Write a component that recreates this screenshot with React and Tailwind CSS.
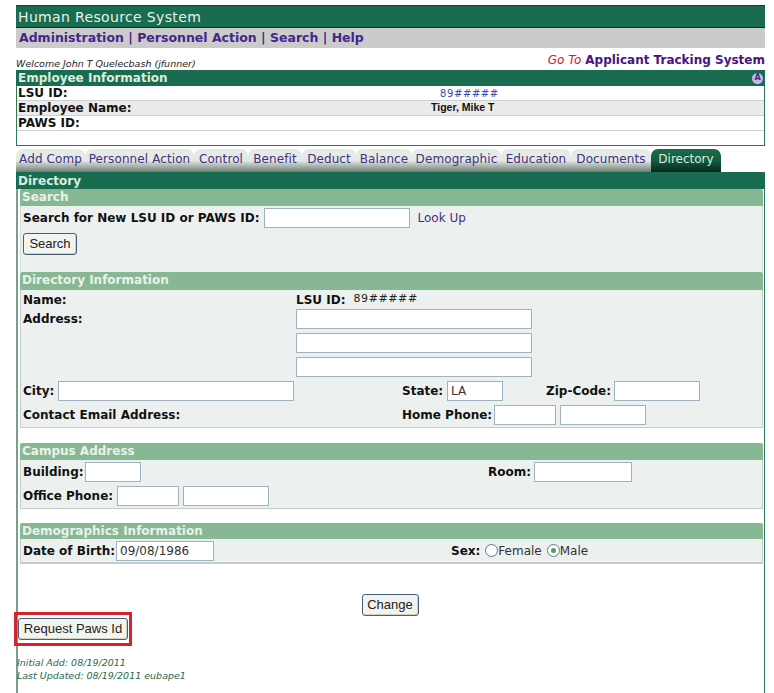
const font = { fontFamily: '"DejaVu Sans", sans-serif' };

function Inp({ w, value, extra = "" }) {
  return (
    <div className={`h-[20px] shrink-0 border border-[#9fb2c0] bg-white px-[3px] text-[12px] leading-[18px] text-[#333] ${w} ${extra}`}>
      {value}
    </div>
  );
}

function Btn({ children, w }) {
  return (
    <div className={`flex h-[22px] items-center justify-center rounded-[3px] border border-[#47607a] bg-[#f4f4ee] text-[13px] text-[#222] shadow-[inset_-1px_-1px_0_#cfcfc8] ${w}`} style={{ fontFamily: '"Liberation Sans", sans-serif' }}>
      {children}
    </div>
  );
}

function SecHead({ children, h = "h-[17px]" }) {
  return (
    <div className={`${h} rounded-t-[2px] bg-[#88b794] pl-[2px] text-[12px] font-bold leading-[17px] text-[#e8f2ea]`}>
      {children}
    </div>
  );
}

const L = ({ children, className = "" }) => (
  <span className={`whitespace-nowrap text-[12px] font-bold text-[#111] ${className}`}>{children}</span>
);

const tabs = [
  ["Add Comp", "w-[69px]"],
  ["Personnel Action", "w-[109px]"],
  ["Control", "w-[54px]"],
  ["Benefit", "w-[54px]"],
  ["Deduct", "w-[54px]"],
  ["Balance", "w-[56px]"],
  ["Demographic", "w-[89px]"],
  ["Education", "w-[70px]"],
  ["Documents", "w-[80px]"],
];

function Radio({ checked }) {
  return (
    <span className="flex h-[13px] w-[13px] items-center justify-center rounded-full border border-[#5a7590] bg-white">
      {checked && <span className="h-[5px] w-[5px] rounded-full bg-[#4aa05e]" />}
    </span>
  );
}

export default function App() {
  return (
    <div className="h-[693px] w-[774px] overflow-hidden bg-white pl-[16px] pr-[9px] pt-[5px]" style={font}>
      {/* title */}
      <div className="h-[23px] border-t border-b border-t-[#0f4a35] border-b-[#10241b] bg-[#196c4f] pl-[2px] text-[14px] leading-[22px] tracking-[0.35px] text-[#e6f3ee]">
        Human Resource System
      </div>
      <div className="flex h-[20px] items-center bg-[#cbcbcb] pl-[3px] text-[12.5px] font-bold text-[#46258c]">
        Administration | Personnel Action | Search | Help
      </div>

      {/* welcome row */}
      <div className="flex h-[22px] items-end justify-between">
        <span className="text-[9.5px] italic leading-[12px] text-[#222]">Welcome John T Quelecbash (jfunner)</span>
        <span className="mb-[3px] whitespace-nowrap text-[12px] leading-[14px]">
          <span className="italic text-[#c0262c]">Go To </span>
          <span className="font-bold text-[#46147c]">Applicant Tracking System</span>
        </span>
      </div>

      {/* employee info */}
      <div className="h-[76px] border border-t-0 border-[#2d7a5f]">
        <div className="-mx-px flex h-[16px] items-center justify-between bg-[#196c4f] px-[2px] text-[12px] font-bold leading-[16px] text-[#dcecdf]">
          Employee Information
          <span className="flex h-[11px] w-[11px] items-center justify-center rounded-full bg-[#c9b8e6] text-[8px] text-[#46258c]">A</span>
        </div>
        <div className="flex h-[15px] items-center border-b border-[#cfcfcf] pl-px">
          <L className="w-[420px] text-[#111]">LSU ID:</L>
          <span className="pl-[2px] text-[10px] tracking-[0.6px] text-[#3c4bb0]">89#####</span>
        </div>
        <div className="flex h-[15px] items-center border-b border-[#cfcfcf] bg-[#ebebeb] pl-px">
          <L className="w-[413px]">Employee Name:</L>
          <span className="text-[10.5px] font-bold text-[#111]" style={{ fontFamily: '"Liberation Sans", sans-serif' }}>Tiger, Mike T</span>
        </div>
        <div className="flex h-[15px] items-center border-b border-[#cfcfcf] pl-px">
          <L>PAWS ID:</L>
        </div>
      </div>

      {/* tabs */}
      <div className="mt-[3px] flex h-[23px] items-end">
        {tabs.map(([t, w]) => (
          <div key={t} className={`flex h-[23px] items-center justify-center rounded-t-[7px] bg-gradient-to-b from-[#e4ece6] via-[#e4e9e5] to-[#6f7f76] pb-[4px] text-[12px] tracking-[0.1px] text-[#46307f] ${w}`}>
            {t}
          </div>
        ))}
        <div className="flex h-[23px] w-[70px] items-center justify-center rounded-t-[7px] bg-gradient-to-b from-[#196c4f] via-[#145c42] to-[#07281c] pb-[4px] text-[12px] text-[#dcecdf]">
          Directory
        </div>
      </div>

      {/* directory panel */}
      <div className="h-[521px] border-l-2 border-r border-l-[#7d9c90] border-r-[#2d7a5f]">
        <div className="-ml-[2px] -mr-px h-[17px] rounded-tr-[2px] bg-[#196c4f] pl-[2px] text-[12px] font-bold leading-[18px] text-[#dcecdf]">
          Directory
        </div>

        <div className="ml-[2px] mr-[1px]">
          <SecHead>Search</SecHead>
          <div className="h-[66px] border-x border-[#d4dcd8] bg-[#ecf1ef] pl-[2px] pt-[2px]">
            <div className="flex items-center gap-[4px]">
              <L>Search for New LSU ID or PAWS ID:</L>
              <Inp w="w-[146px]" />
              <span className="ml-[4px] text-[12px] text-[#46307f]">Look Up</span>
            </div>
            <div className="mt-[5px] w-[54px]">
              <Btn w="w-[54px]">Search</Btn>
            </div>
          </div>

          <SecHead h="h-[18px]">Directory Information</SecHead>
          <div className="h-[138px] border border-t-0 border-[#c3cec9] bg-[#ecf1ef] pl-[2px]">
            <div className="flex h-[19px] items-center">
              <L className="w-[273px]">Name:</L>
              <L>LSU ID:</L>
              <span className="ml-[8px] text-[11px] tracking-[0.6px] text-[#222]">89#####</span>
            </div>
            <div className="flex">
              <L className="w-[273px] pt-[1px]">Address:</L>
              <div className="flex flex-col gap-[4px]">
                <Inp w="w-[236px]" />
                <Inp w="w-[236px]" />
                <Inp w="w-[236px]" />
              </div>
            </div>
            <div className="mt-[4px] flex h-[20px] items-center">
              <L className="w-[35px]">City:</L>
              <Inp w="w-[236px]" />
              <L className="ml-[108px] w-[45px]">State:</L>
              <Inp w="w-[56px]" value="LA" />
              <L className="ml-[43px] w-[68px]">Zip-Code:</L>
              <Inp w="w-[86px]" />
            </div>
            <div className="mt-[4px] flex h-[20px] items-center">
              <L className="w-[379px]">Contact Email Address:</L>
              <L className="w-[92px]">Home Phone:</L>
              <Inp w="w-[62px]" />
              <Inp w="w-[86px]" extra="ml-[4px]" />
            </div>
          </div>

          <div className="mt-[15px]">
            <SecHead>Campus Address</SecHead>
            <div className="h-[49px] border border-t-0 border-[#c3cec9] bg-[#ecf1ef] pl-[2px] pt-[2px]">
              <div className="flex h-[20px] items-center">
                <L className="w-[62px]">Building:</L>
                <Inp w="w-[56px]" />
                <L className="ml-[347px] w-[46px]">Room:</L>
                <Inp w="w-[98px]" />
              </div>
              <div className="mt-[4px] flex h-[20px] items-center">
                <L className="w-[94px]">Office Phone:</L>
                <Inp w="w-[62px]" />
                <Inp w="w-[86px]" extra="ml-[4px]" />
              </div>
            </div>
          </div>

          <div className="mt-[14px]">
            <SecHead h="h-[16px]">Demographics Information</SecHead>
            <div className="flex h-[25px] items-center border-x border-b-2 border-[#c3cec9] bg-[#ecf1ef] pl-[2px]">
              <L className="w-[93px]">Date of Birth:</L>
              <Inp w="w-[98px]" value="09/08/1986" />
              <L className="ml-[237px]">Sex:</L>
              <span className="ml-[5px]"><Radio /></span>
              <span className="text-[12px] text-[#333]">Female</span>
              <span className="ml-[5px]"><Radio checked /></span>
              <span className="text-[12px] text-[#333]">Male</span>
            </div>
          </div>

          <div className="mt-[30px] flex justify-center pr-[3px]">
            <Btn w="w-[57px]">Change</Btn>
          </div>
        </div>

        {/* request */}
        <div className="-ml-[4px] -mt-[4px] flex h-[34px] w-[118px] items-center justify-center border-[3px] border-[#d6222c]">
          <Btn w="w-[110px]">Request Paws Id</Btn>
        </div>

        <div className="-ml-[1px] mt-[10px] text-[9.5px] italic leading-[13px] text-[#1f6a4c]">
          <div>Initial Add: 08/19/2011</div>
          <div>Last Updated: 08/19/2011 eubape1</div>
        </div>
      </div>
    </div>
  );
}
